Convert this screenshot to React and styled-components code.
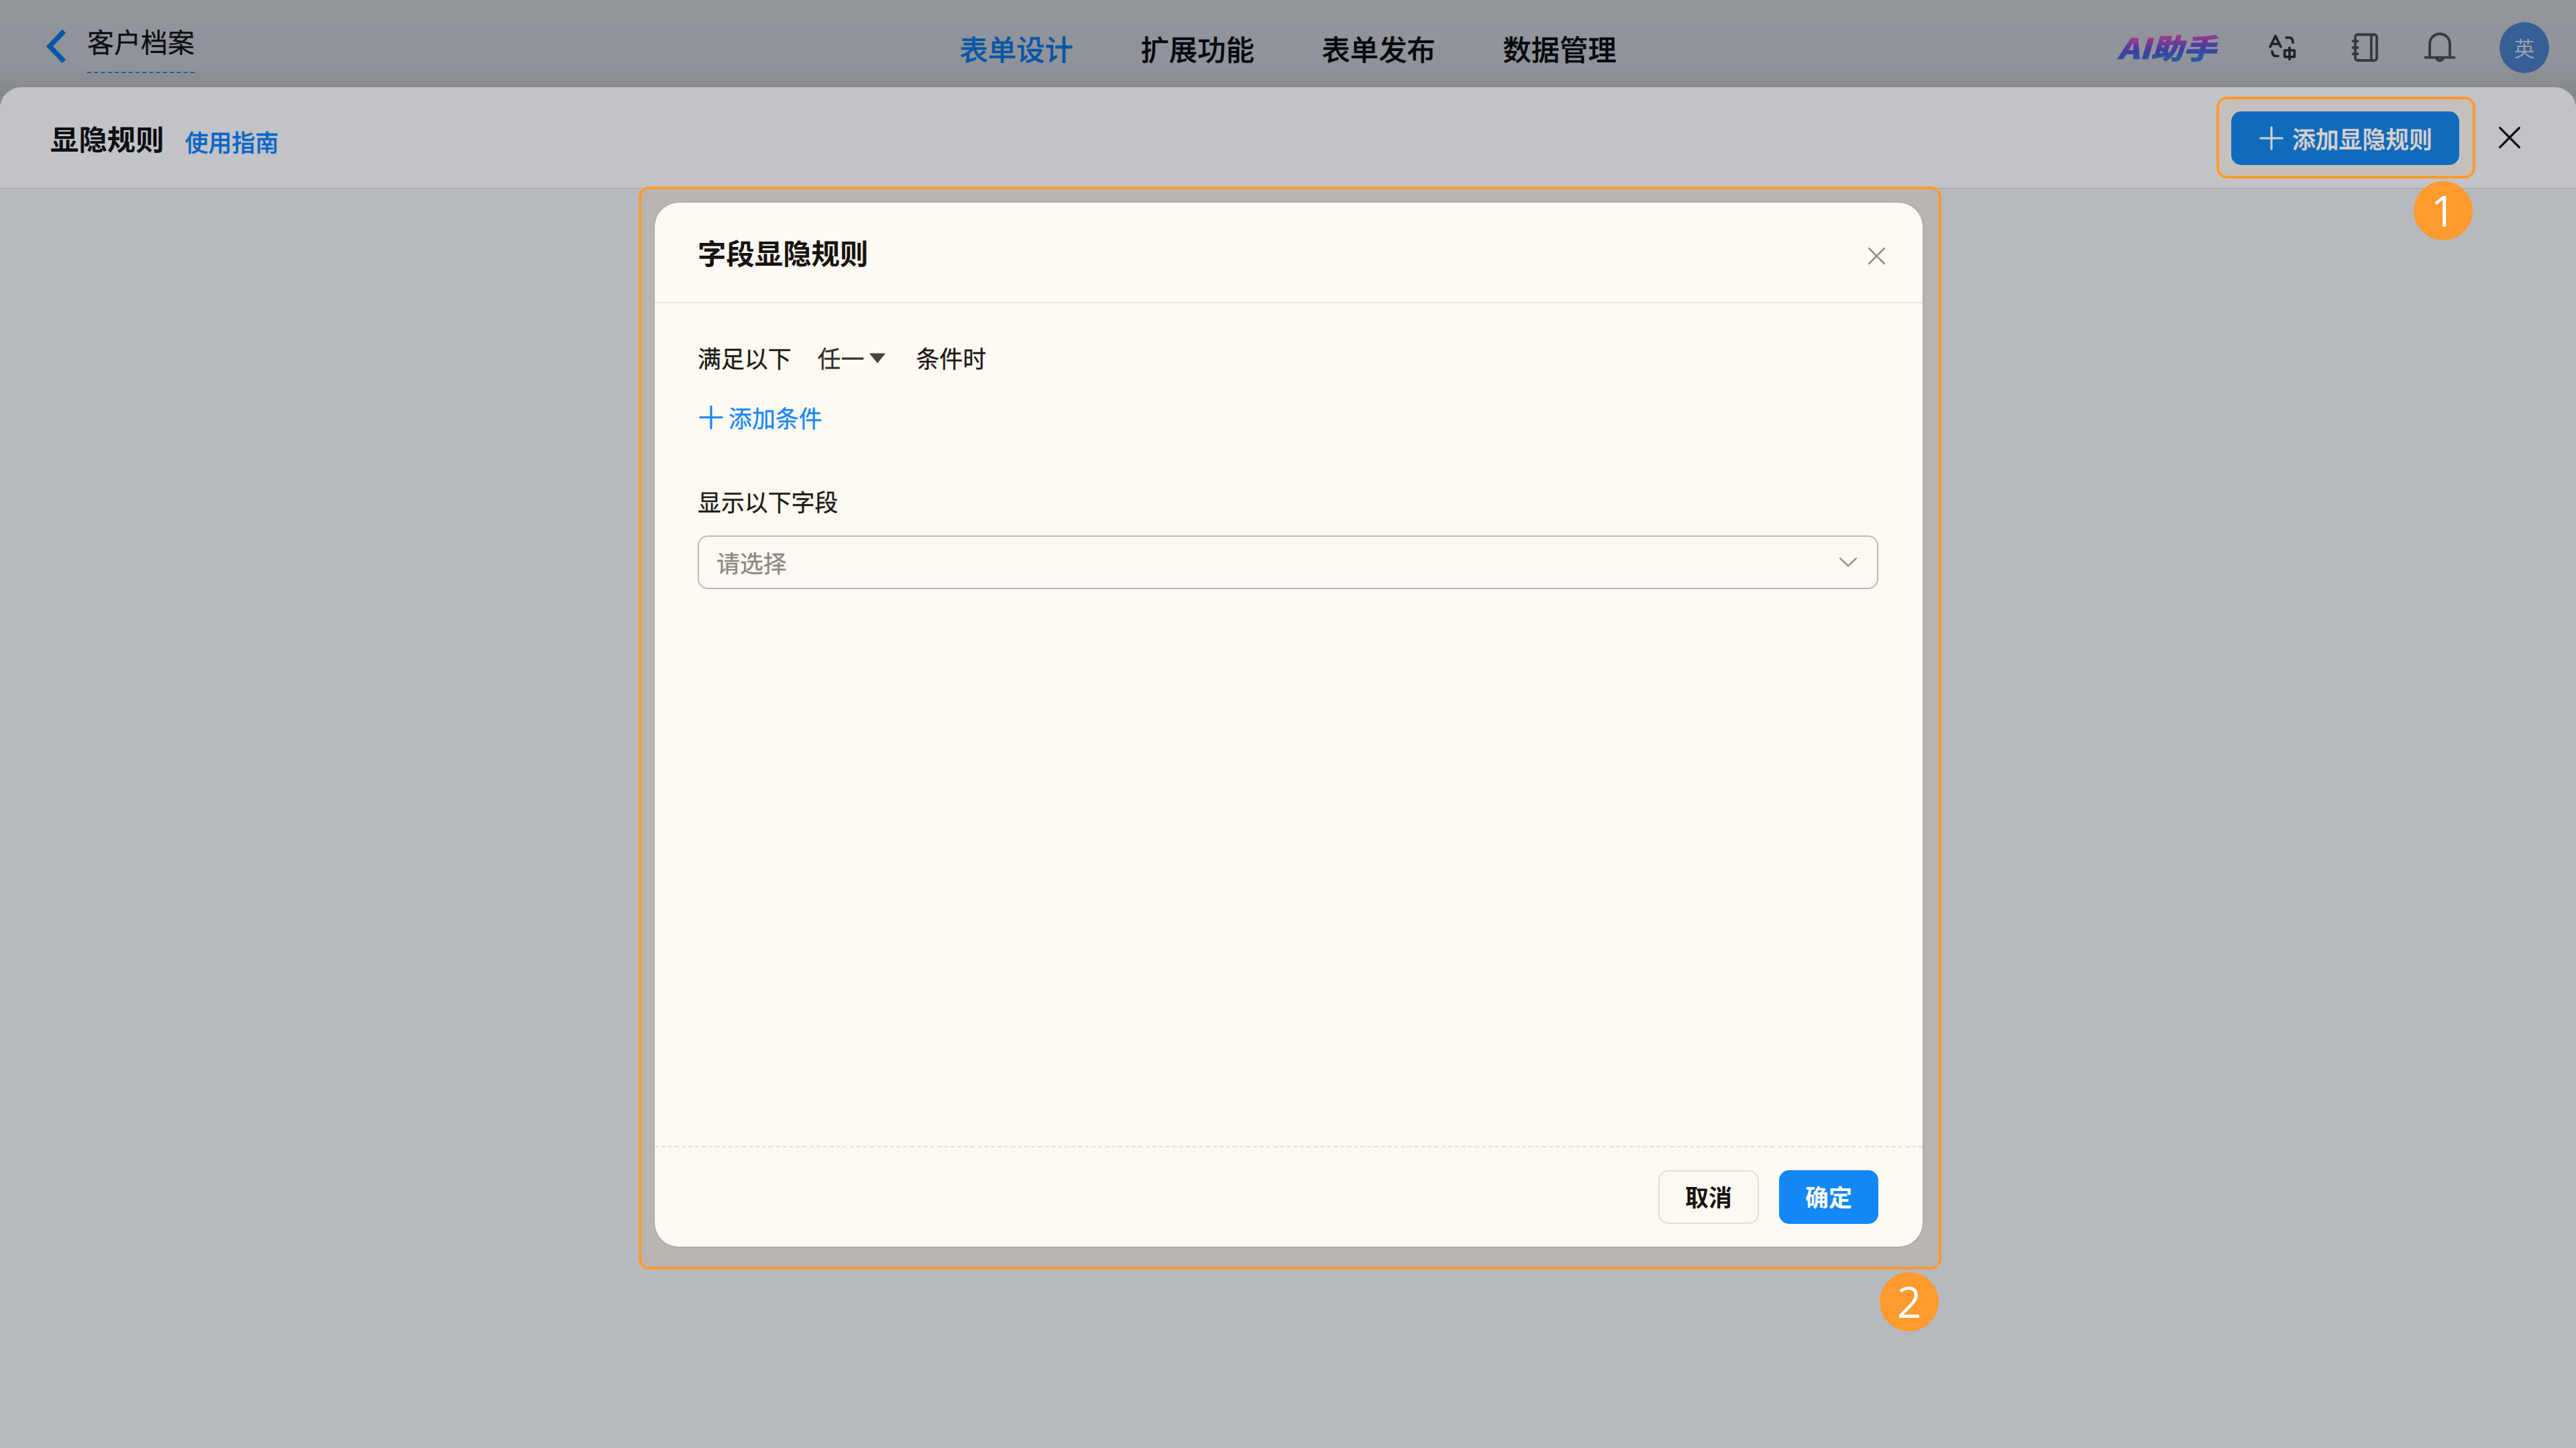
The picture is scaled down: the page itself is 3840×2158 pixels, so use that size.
import React from "react";
import styled, { createGlobalStyle } from "styled-components";

const GlobalStyle = createGlobalStyle`
  *, *::before, *::after { box-sizing: border-box; }
  body {
    margin: 0;
    background: #b6babf;
    font-family: "Noto Sans CJK SC", "Noto Sans", sans-serif;
    color: #0b0d10;
  }
  button { font-family: inherit; margin: 0; padding: 0; border: 0; background: none; }
  svg { display: block; flex: none; }
`;

const Page = styled.div`
  position: relative;
  display: flex;
  flex-direction: column;
  width: 3840px;
  height: 2158px;
  overflow: hidden;
  background: linear-gradient(180deg, #929699 0, #91959b 46px, #90939a 92px, #888b8e 130px, #888b8e 170px, #b6babf 170px);
`;

const TopBar = styled.header`
  display: grid;
  grid-template-columns: 1fr auto 1fr;
  height: 130px;
  flex: none;
`;

const FormTitle = styled.div`
  display: flex;
  align-items: flex-start;
  gap: 31px;
  padding: 17px 0 0 68px;

  svg { margin-top: 26px; }
`;

const FormName = styled.div`
  height: 92px;
  line-height: 89px;
  font-size: 40px;
  -webkit-text-stroke: 0.3px;
  border-bottom: 2px dashed #1a5c9f;
`;

const Nav = styled.nav`
  display: flex;
  gap: 100.4px;
  padding-top: 12px;
`;

const NavItem = styled.a`
  font-size: 42.4px;
  font-weight: 500;
  line-height: 120px;
  -webkit-text-stroke: 0.3px;
  color: ${(p) => (p.$active ? "#0556a6" : "#04070b")};
`;

const Tools = styled.div`
  display: flex;
  justify-content: flex-end;
  align-items: center;
  padding: 10px 40px 0 0;
`;

const AiLabel = styled.span`
  margin: 0 70px 2px 0;
  padding: 0 6px;
  font-size: 42px;
  font-weight: 900;
  font-style: italic;
  line-height: 60px;
  color: transparent;
  transform: scaleX(1.16);
  transform-origin: right center;
  -webkit-text-stroke: 0.6px transparent;
  background: linear-gradient(176deg, #a63f86 24%, #70389c 42%, #3d40a0 56%, #2a5aa4 80%);
  background-clip: text;
  -webkit-background-clip: text;
`;

const ToolIcon = styled.span`
  margin-right: ${(p) => p.$after}px;
`;

const Avatar = styled.span`
  display: flex;
  align-items: center;
  justify-content: center;
  width: 74px;
  height: 76px;
  padding-bottom: 1px;
  border-radius: 50%;
  background: #355f95;
  color: #9aa1a9;
  font-size: 31px;
`;

const Sheet = styled.main`
  flex: 1;
  display: flex;
  flex-direction: column;
  border-radius: 32px 32px 0 0;
  overflow: hidden;
  background: #b6babf;
`;

const SheetHeader = styled.div`
  display: flex;
  align-items: center;
  height: 152px;
  padding: 0 82px 0 75px;
  background: #c2c3c7;
  border-bottom: 2px solid #acaeb1;
`;

const SheetTitle = styled.h1`
  margin: 2px 0 0;
  font-size: 42.4px;
  font-weight: 700;
  line-height: 60px;
`;

const GuideLink = styled.a`
  margin: 11px auto 0 31px;
  font-size: 35px;
  font-weight: 500;
  line-height: 50px;
  -webkit-text-stroke: 0.3px;
  color: #0566c8;
`;

const Callout = styled.div`
  border: 4px solid #ff9b2e;
  border-radius: 16px;
`;

const ButtonCallout = styled(Callout)`
  width: 386px;
  height: 122px;
  padding: 18px;
  margin-right: 34px;
  background: #c5c0bb;
`;

const AddRuleButton = styled.button`
  display: flex;
  align-items: center;
  gap: 13px;
  width: 340px;
  height: 80px;
  padding: 0 0 1px 42px;
  border-radius: 15px;
  background: #106abe;
  box-shadow: 0 0 0 1px #cfc5bc;
  color: #d9d1cb;
  font-size: 34.8px;
  font-weight: 500;
  line-height: 50px;
  -webkit-text-stroke: 0.5px;
`;

const ModalCallout = styled(Callout)`
  position: absolute;
  left: 952px;
  top: 278px;
  width: 1942px;
  height: 1614px;
  padding: 20px 24px 30px 20px;
  background: #bab5b3;
`;

const Modal = styled.section`
  display: flex;
  flex-direction: column;
  width: 1890px;
  height: 1556px;
  border-radius: 36px;
  background: #fef9f2;
  box-shadow: 0 0 2px 1px rgba(80, 80, 80, 0.18);
`;

const ModalHeader = styled.div`
  display: flex;
  align-items: center;
  justify-content: space-between;
  height: 150px;
  padding: 0 55px 1px 64px;
  border-bottom: 2px solid #e7e3dc;

  svg { margin-top: 12px; }
`;

const ModalTitle = styled.h2`
  margin: 0;
  font-size: 42.4px;
  font-weight: 700;
  line-height: 60px;
  color: #16130f;
`;

const ModalBody = styled.div`
  flex: 1;
  padding: 51px 66px 0 64px;
  font-size: 34.9px;
  -webkit-text-stroke: 0.3px;
  color: #1a1713;
`;

const ConditionRow = styled.div`
  display: flex;
  align-items: center;
  height: 60px;
`;

const MatchSelect = styled.span`
  display: flex;
  align-items: center;
  gap: 7px;
  margin: 0 44px 0 39px;
  color: #35312c;

  svg { margin-top: 2px; }
`;

const AddCondition = styled.button`
  display: flex;
  align-items: center;
  gap: 8px;
  height: 60px;
  margin-top: 29px;
  padding: 0 0 0 2px;
  font-size: 34.9px;
  color: #1286fb;
`;

const FieldLabel = styled.div`
  margin: 75px 0 31px;
  height: 40px;
  line-height: 40px;
`;

const FieldSelect = styled.div`
  display: flex;
  align-items: center;
  justify-content: space-between;
  height: 80px;
  padding: 0 29px 1px 26px;
  border: 2px solid #bebcbb;
  border-radius: 15px;
  color: #8b8680;
`;

const ModalFooter = styled.div`
  display: flex;
  justify-content: flex-end;
  gap: 30px;
  height: 150px;
  padding: 34px 66px 0 0;
  border-top: 2px dashed #e4e0da;
`;

const FooterButton = styled.button`
  width: ${(p) => (p.$primary ? 148 : 150)}px;
  height: 80px;
  padding-bottom: 2px;
  border-radius: 15px;
  border: 2px solid ${(p) => (p.$primary ? "#1287f5" : "#e1dedc")};
  background: ${(p) => (p.$primary ? "#1287f5" : "transparent")};
  color: ${(p) => (p.$primary ? "#ffffff" : "#16130f")};
  font-size: 34.9px;
  font-weight: 700;
`;

const StepBadge = styled.div`
  position: absolute;
  left: ${(p) => p.$x}px;
  top: ${(p) => p.$y}px;
  width: 88px;
  height: 88px;
  border-radius: 50%;
  background: #ff9b2e;
  color: #fff;
  font-family: "Open Sans", "Noto Sans", sans-serif;
  font-size: 64px;
  line-height: 88px;
  text-align: center;
`;

const BackIcon = () => (
  <svg width="31" height="52" viewBox="0 0 31 52" fill="none" stroke="#0258a8" strokeWidth="7.5">
    <path d="M27.5 3.5L6 26L27.5 48.5" />
  </svg>
);

const TranslateIcon = () => (
  <svg width="44" height="44" viewBox="0 0 44 44" fill="none" stroke="#1e2227" strokeWidth="3.6" strokeLinejoin="round">
    <path d="M3.5 22L12 4.500L20.500 22M6.500 16.500H17.500" />
    <path d="M28 7H33Q38 7.500 38 14.500" strokeLinecap="round" />
    <path d="M7 27.500Q7.500 34.500 13 34.500H16" strokeLinecap="round" />
    <path d="M25.700 26H40.300V35.700H25.700ZM33 20.700V41" />
  </svg>
);

const NotebookIcon = () => (
  <svg width="44" height="44" viewBox="0 0 44 44" fill="none" stroke="#363a40" strokeWidth="3.8" strokeLinecap="round">
    <rect x="7" y="2.500" width="32" height="38.500" rx="3.500" />
    <path d="M30.800 3V41M3.500 12.300H10.500M3.500 22H10.500M3.500 31.300H10.500" />
  </svg>
);

const BellIcon = () => (
  <svg width="48" height="48" viewBox="0 0 48 48" fill="none" stroke="#363a40" strokeWidth="3.800" strokeLinecap="round">
    <path d="M2.500 38.700H45.500M9 38V18.500A15 15 0 0 1 39 18.500V38" />
    <path d="M19 39.500A5.200 5.200 0 0 0 29 39.500" />
  </svg>
);

const PlusIcon = () => (
  <svg width="36" height="36" viewBox="0 0 36 36" fill="none" stroke="currentColor" strokeWidth="3.2" strokeLinecap="round">
    <path d="M18 1.800V34.200M1.800 18H34.200" />
  </svg>
);

const CloseIcon = ({ size, color, weight }) => (
  <svg width={size} height={size} viewBox="0 0 32 32" fill="none" stroke={color} strokeWidth={weight} strokeLinecap="round">
    <path d="M2.500 2.500L29.500 29.500M29.500 2.500L2.500 29.500" />
  </svg>
);

const CaretIcon = () => (
  <svg width="26" height="16" viewBox="0 0 26 16" fill="#4a453f">
    <path d="M2 .5H24Q25 .5 24.300 1.500L13.700 14.500Q13 15.300 12.300 14.500L1.700 1.500Q1 .5 2 .5Z" />
  </svg>
);

const ChevronIcon = () => (
  <svg width="28" height="16" viewBox="0 0 28 16" fill="none" stroke="#8f8a86" strokeWidth="2.400" strokeLinecap="round" strokeLinejoin="round">
    <path d="M2 2L14 13.300L26 2" />
  </svg>
);

const navItems = ["表单设计", "扩展功能", "表单发布", "数据管理"];

export default function App() {
  return (
    <Page>
      <GlobalStyle />
      <TopBar>
        <FormTitle>
          <BackIcon />
          <FormName>客户档案</FormName>
        </FormTitle>
        <Nav>
          {navItems.map((label, i) => (
            <NavItem key={label} $active={i === 0}>{label}</NavItem>
          ))}
        </Nav>
        <Tools>
          <AiLabel>AI助手</AiLabel>
          <ToolIcon $after={80}><TranslateIcon /></ToolIcon>
          <ToolIcon $after={65}><NotebookIcon /></ToolIcon>
          <ToolIcon $after={65}><BellIcon /></ToolIcon>
          <Avatar>英</Avatar>
        </Tools>
      </TopBar>

      <Sheet>
        <SheetHeader>
          <SheetTitle>显隐规则</SheetTitle>
          <GuideLink>使用指南</GuideLink>
          <ButtonCallout>
            <AddRuleButton>
              <PlusIcon />
              添加显隐规则
            </AddRuleButton>
          </ButtonCallout>
          <CloseIcon size={34} color="#0d0f12" weight={3.2} />
        </SheetHeader>
      </Sheet>

      <ModalCallout>
        <Modal>
          <ModalHeader>
            <ModalTitle>字段显隐规则</ModalTitle>
            <CloseIcon size={27} color="#8a8682" weight={2.8} />
          </ModalHeader>
          <ModalBody>
            <ConditionRow>
              <span>满足以下</span>
              <MatchSelect>
                任一
                <CaretIcon />
              </MatchSelect>
              <span>条件时</span>
            </ConditionRow>
            <AddCondition>
              <PlusIcon />
              添加条件
            </AddCondition>
            <FieldLabel>显示以下字段</FieldLabel>
            <FieldSelect>
              请选择
              <ChevronIcon />
            </FieldSelect>
          </ModalBody>
          <ModalFooter>
            <FooterButton>取消</FooterButton>
            <FooterButton $primary>确定</FooterButton>
          </ModalFooter>
        </Modal>
      </ModalCallout>

      <StepBadge $x={3598} $y={270}>1</StepBadge>
      <StepBadge $x={2802} $y={1896}>2</StepBadge>
    </Page>
  );
}
